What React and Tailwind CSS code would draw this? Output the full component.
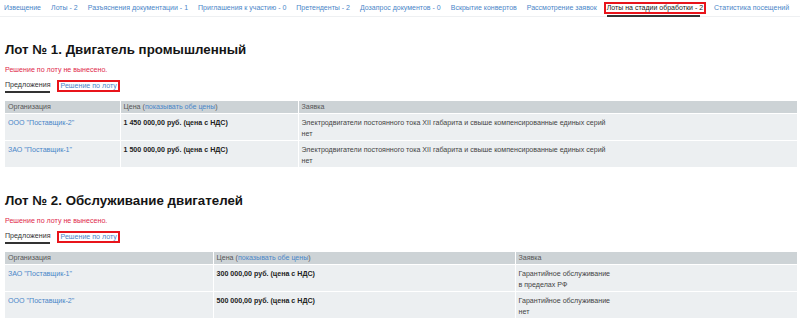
import React from 'react';

const navItems = [
    'Извещение',
    'Лоты - 2',
    'Разъяснения документации - 1',
    'Приглашения к участию - 0',
    'Претенденты - 2',
    'Дозапрос документов - 0',
    'Вскрытие конвертов',
    'Рассмотрение заявок',
    'Лоты на стадии обработки - 2',
    'Статистика посещений',
];

const lots = [
    {
        title: 'Лот № 1. Двигатель промышленный',
        cols: ['w-[115px]', 'w-[178px]', ''],
        rows: [
            { org: 'ООО "Поставщик-2"', price: '1 450 000,00 руб. (цена с НДС)', lines: ['Электродвигатели постоянного тока XII габарита и свыше компенсированные единых серий', 'нет'] },
            { org: 'ЗАО "Поставщик-1"', price: '1 500 000,00 руб. (цена с НДС)', lines: ['Электродвигатели постоянного тока XII габарита и свыше компенсированные единых серий', 'нет'] },
        ],
    },
    {
        title: 'Лот № 2. Обслуживание двигателей',
        cols: ['w-[208px]', 'w-[302px]', ''],
        rows: [
            { org: 'ЗАО "Поставщик-1"', price: '300 000,00 руб. (цена с НДС)', lines: ['Гарантийное обслуживание', 'в пределах РФ'] },
            { org: 'ООО "Поставщик-2"', price: '500 000,00 руб. (цена с НДС)', lines: ['Гарантийное обслуживание', 'нет'] },
        ],
    },
];

const Lot = ({ lot, first }) => (
    <div className={first ? 'px-[5px] mt-[25px]' : 'px-[5px] mt-[26px]'}>
        <h2 className="text-[13.3px] font-bold text-[#151515] leading-[16px]">{lot.title}</h2>
        <div className="text-[7.1px] leading-[10px] text-[#e0284a] mt-[7px]">Решение по лоту не вынесено.</div>
        {/* Tabs */}
        <div className="flex items-start gap-[7px] mt-[5px] h-[13px]">
            <div className="text-[7.1px] leading-[10px] text-[#333] pb-[1px] border-b-2 border-[#333]">Предложения</div>
            <div className="h-[12px] flex items-center text-[7.1px] text-[#4a86c8] border-2 border-[#e8141b] px-[1px]">Решение по лоту</div>
        </div>
        <table className="w-[792px] border-collapse mt-[8px] text-[7.1px] leading-[10px]">
            <colgroup>
                {lot.cols.map((c, i) => <col key={i} className={c} />)}
            </colgroup>
            <thead>
                <tr className="bg-[#cdd3d6] text-[#555] h-[12px]">
                    <th className="text-left font-normal px-[3px] py-0 leading-[12px]">Организация</th>
                    <th className="text-left font-normal px-[3px] py-0 leading-[12px] border-l border-white">
                        Цена (<span className="text-[#4a86c8]">показывать обе цены</span>)
                    </th>
                    <th className="text-left font-normal px-[3px] py-0 leading-[12px] border-l border-white">Заявка</th>
                </tr>
            </thead>
            <tbody>
                {lot.rows.map((r, i) => (
                    <tr key={i} className="bg-[#eceff1] border-t border-white align-top h-[26px]">
                        <td className="px-[3px] pt-[4px] text-[#4a86c8]">{r.org}</td>
                        <td className="px-[3px] pt-[4px] font-bold text-[#222] border-l border-white">{r.price}</td>
                        <td className="px-[3px] pt-[4px] text-[#444] border-l border-white">
                            {r.lines.map((l, j) => <div key={j} className="leading-[11px]">{l}</div>)}
                        </td>
                    </tr>
                ))}
            </tbody>
        </table>
    </div>
);

export default function App() {
    return (
        <div className="w-[800px] h-[322px] bg-white overflow-hidden font-['Liberation_Sans',Arial,sans-serif]">
            {/* Top navigation */}
            <div className="flex items-start gap-[10px] pl-[4px] h-[17px] border-b border-[#eef0f2] text-[7px] leading-[10px] whitespace-nowrap">
                {navItems.map((item) =>
                    item === 'Лоты на стадии обработки - 2' ? (
                        <div key={item} className="relative -ml-[3px] -mr-[2px] mt-[2px]">
                            <div className="h-[12px] flex items-center border-2 border-[#e8141b] px-[1px] text-[#222]">{item}</div>
                            <div className="absolute left-[3px] right-[6px] top-[13px] h-[2px] bg-[#333]" />
                        </div>
                    ) : (
                        <span key={item} className="text-[#4a86c8] mt-[3px]">{item}</span>
                    )
                )}
            </div>
            {lots.map((lot, i) => (
                <Lot key={i} lot={lot} first={i === 0} />
            ))}
        </div>
    );
}
